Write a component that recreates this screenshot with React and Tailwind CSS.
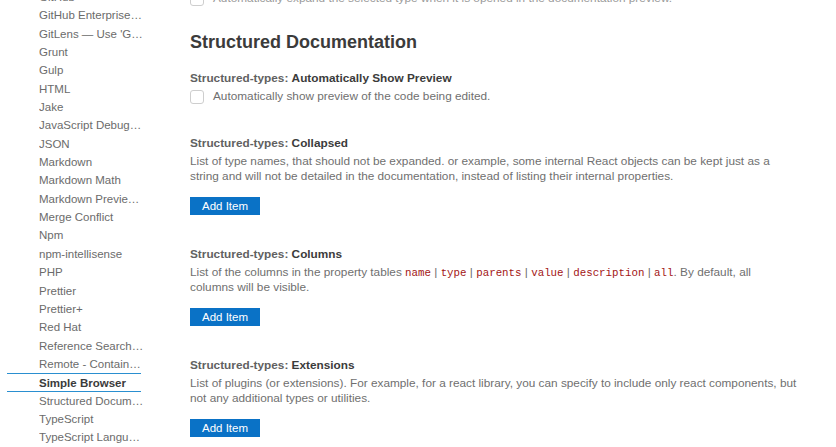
import React from "react";

const extensions = [
  "GitHub",
  "GitHub Enterprise Server Authentication",
  "GitLens — Use 'Git' with GitLens",
  "Grunt",
  "Gulp",
  "HTML",
  "Jake",
  "JavaScript Debugger",
  "JSON",
  "Markdown",
  "Markdown Math",
  "Markdown Preview Enhanced",
  "Merge Conflict",
  "Npm",
  "npm-intellisense",
  "PHP",
  "Prettier",
  "Prettier+",
  "Red Hat",
  "Reference Search View",
  "Remote - Containers",
  "Simple Browser",
  "Structured Documentation",
  "TypeScript",
  "TypeScript Language Features",
];

const sans = "font-['Liberation_Sans',Arial,sans-serif]";

function Checkbox() {
  return <div className="size-[14px] shrink-0 rounded-[3px] border border-[#cecece] bg-white" />;
}

function SettingTitle({ name }) {
  return (
    <div className="h-[16px] leading-[16px] text-[11.8px]">
      <span className="font-semibold text-[#616161]">Structured-types: </span>
      <span className="font-bold text-[#3b3b3b]">{name}</span>
    </div>
  );
}

function AddItem() {
  return (
    <button className="mt-[13px] h-[18px] w-[70px] bg-[#0a72c6] text-[11.5px] leading-[18px] text-white">
      Add Item
    </button>
  );
}

function Code({ children }) {
  return (
    <code className="font-['Liberation_Mono',monospace] text-[10.8px] leading-none text-[#a31515]">{children}</code>
  );
}

export default function App() {
  const cols = ["name", "type", "parents", "value", "description", "all"];
  return (
    <div className={`flex h-[447px] w-[836px] overflow-hidden bg-white ${sans}`}>
      <aside className="w-[141px] shrink-0 pl-[7px]">
        <ul className="-mt-[12px] text-[11.5px] text-[#6b6b6b]">
          {extensions.map((name) => {
            const selected = name === "Simple Browser";
            return (
              <li
                key={name}
                className={`h-[18.35px] pl-[32px] leading-[18.35px] ${
                  selected ? "border-y border-[#2a8fd0] font-bold leading-[16.35px] text-[#3b3b3b]" : ""
                }`}
              >
                <div className="w-[106px] truncate">{name}</div>
              </li>
            );
          })}
        </ul>
      </aside>

      <main className="flex flex-1 flex-col pl-[49px]">
        <div className="-mt-[10px] flex items-center gap-[9px]">
          <Checkbox />
          <span className="text-[11.8px] text-[#9a9a9a]">
            Automatically expand the selected type when it is opened in the documentation preview.
          </span>
        </div>

        <h2 className="mt-[22px] h-[24px] text-[18px] font-bold leading-[24px] text-[#3b3b3b]">
          Structured Documentation
        </h2>

        <div className="mt-[16px]">
          <SettingTitle name="Automatically Show Preview" />
          <div className="mt-[4px] flex h-[15px] items-center gap-[9px]">
            <Checkbox />
            <span className="text-[11.8px] text-[#6f6f6f]">Automatically show preview of the code being edited.</span>
          </div>
        </div>

        <div className="mt-[30px] flex flex-col items-start">
          <SettingTitle name="Collapsed" />
          <p className="mt-[3px] w-[606px] text-[11.8px] leading-[15px] text-[#6f6f6f]">
            List of type names, that should not be expanded. or example, some internal React objects can be kept just
            as a string and will not be detailed in the documentation, instead of listing their internal properties.
          </p>
          <AddItem />
        </div>

        <div className="mt-[31px] flex flex-col items-start">
          <SettingTitle name="Columns" />
          <p className="mt-[3px] w-[606px] text-[11.8px] leading-[15px] text-[#6f6f6f]">
            List of the columns in the property tables{" "}
            {cols.map((c, i) => (
              <React.Fragment key={c}>
                <Code>{c}</Code>
                {i < cols.length - 1 ? " | " : ""}
              </React.Fragment>
            ))}
            . By default, all columns will be visible.
          </p>
          <AddItem />
        </div>

        <div className="mt-[31px] flex flex-col items-start">
          <SettingTitle name="Extensions" />
          <p className="mt-[3px] w-[612px] text-[11.8px] leading-[15px] text-[#6f6f6f]">
            List of plugins (or extensions). For example, for a react library, you can specify to include only react
            components, but not any additional types or utilities.
          </p>
          <AddItem />
        </div>
      </main>
    </div>
  );
}
